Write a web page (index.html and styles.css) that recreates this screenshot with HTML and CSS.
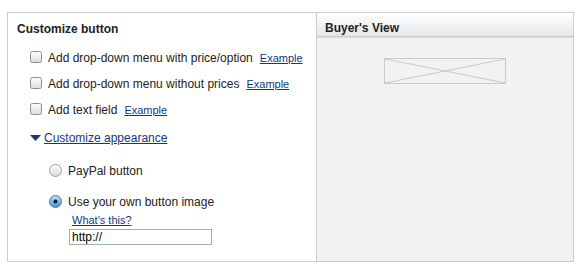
FILE: index.html
```html
<!DOCTYPE html>
<html>
<head>
<meta charset="utf-8">
<link rel="stylesheet" href="styles.css">
</head>
<body>
<div class="wrap">
  <div class="left">
    <div class="heading">Customize button</div>
    <div class="row first">
      <svg class="cb" width="12" height="12" viewBox="0 0 12 12"><defs><linearGradient id="g1" x1="0" y1="0" x2="0" y2="1"><stop offset="0" stop-color="#ffffff"/><stop offset="1" stop-color="#dcdcdc"/></linearGradient></defs><rect x="0.5" y="0.5" width="11" height="11" rx="2" fill="url(#g1)" stroke="#8e8e8e"/></svg>
      <span class="label">Add drop-down menu with price/option</span>
      <a class="link" href="#">Example</a>
    </div>
    <div class="row">
      <svg class="cb" width="12" height="12" viewBox="0 0 12 12"><rect x="0.5" y="0.5" width="11" height="11" rx="2" fill="url(#g1)" stroke="#8e8e8e"/></svg>
      <span class="label">Add drop-down menu without prices</span>
      <a class="link" href="#">Example</a>
    </div>
    <div class="row">
      <svg class="cb" width="12" height="12" viewBox="0 0 12 12"><rect x="0.5" y="0.5" width="11" height="11" rx="2" fill="url(#g1)" stroke="#8e8e8e"/></svg>
      <span class="label">Add text field</span>
      <a class="link" href="#">Example</a>
    </div>
    <div class="toggle">
      <svg class="tri" width="11" height="6" viewBox="0 0 11 6"><polygon points="0,0 11,0 5.5,6" fill="#0e3a7e"/></svg>
      <a class="biglink" href="#">Customize appearance</a>
    </div>
    <div class="radio r1">
      <svg class="rd" width="13" height="13" viewBox="0 0 13 13"><defs><linearGradient id="g2" x1="0" y1="0" x2="0" y2="1"><stop offset="0" stop-color="#ffffff"/><stop offset="1" stop-color="#d8d8d8"/></linearGradient><linearGradient id="g3" x1="0" y1="0" x2="0" y2="1"><stop offset="0" stop-color="#bfe0fa"/><stop offset="1" stop-color="#3f8fdc"/></linearGradient></defs><circle cx="6.5" cy="6.5" r="6" fill="url(#g2)" stroke="#9c9c9c"/></svg>
      <span class="label">PayPal button</span>
    </div>
    <div class="radio r2">
      <svg class="rd" width="13" height="13" viewBox="0 0 13 13"><circle cx="6.5" cy="6.5" r="6" fill="url(#g3)" stroke="#4d79a8"/><circle cx="6.5" cy="6.5" r="2" fill="#1b1b1b"/></svg>
      <span class="label">Use your own button image</span>
    </div>
    <div class="sub">
      <a class="link" href="#">What's this?</a>
      <input class="url" type="text" value="http://">
    </div>
  </div>
  <div class="right">
    <div class="rhead">Buyer's View</div>
    <div class="rbody">
      <svg class="ph" width="122" height="26" viewBox="0 0 122 26"><rect x="0.5" y="0.5" width="121" height="25" fill="none" stroke="#c9c9c9"/><line x1="1" y1="1" x2="121" y2="25" stroke="#c9c9c9"/><line x1="121" y1="1" x2="1" y2="25" stroke="#c9c9c9"/></svg>
    </div>
  </div>
</div>
</body>
</html>
```

FILE: styles.css
```css
html, body {
  margin: 0;
  padding: 0;
  background: #ffffff;
}
body {
  font-family: "Liberation Sans", Arial, sans-serif;
  font-size: 12px;
  color: #222222;
}
.wrap {
  margin: 12px 0 0 7px;
  width: 565px;
  height: 248px;
  border: 1px solid #cccccc;
  display: flex;
}
.left {
  width: 308px;
  padding: 9px 0 0 9px;
  box-sizing: border-box;
  background: #ffffff;
}
.heading {
  font-weight: bold;
  font-size: 12px;
  line-height: 14px;
  color: #222222;
}
.row {
  display: flex;
  align-items: center;
  margin: 10px 0 0 13px;
  height: 16px;
  line-height: 16px;
}
.row.first {
  margin-top: 14px;
}
.cb {
  display: block;
  margin-right: 6px;
  position: relative;
  top: -1px;
}
.label {
  white-space: nowrap;
}
.link {
  font-size: 11px;
  color: #0e3a7e;
  text-decoration: underline;
  margin-left: 7px;
}
.toggle {
  display: flex;
  align-items: center;
  margin: 12px 0 0 13px;
  height: 16px;
  line-height: 16px;
}
.tri {
  display: block;
  margin-right: 3px;
}
.biglink {
  color: #0e3a7e;
  text-decoration: underline;
}
.radio {
  display: flex;
  align-items: center;
  margin-left: 32px;
  height: 16px;
  line-height: 16px;
}
.radio.r1 {
  margin-top: 17px;
}
.radio.r2 {
  margin-top: 15px;
}
.rd {
  display: block;
  margin-right: 6px;
  position: relative;
  top: -1px;
}
.sub {
  display: flex;
  flex-direction: column;
  align-items: flex-start;
  margin: 4px 0 0 52px;
}
.sub .link {
  margin-left: 3px;
  line-height: 13px;
}
.url {
  margin: 2px 0 0 0;
  width: 143px;
  height: 16px;
  box-sizing: border-box;
  border: 1px solid #a3abb5;
  padding: 0 2px;
  font-family: "Liberation Sans", Arial, sans-serif;
  font-size: 12px;
  color: #000000;
  background: #ffffff;
  outline: none;
}
.right {
  flex: 1;
  border-left: 1px solid #cccccc;
  background: #f2f2f2;
  display: flex;
  flex-direction: column;
}
.rhead {
  height: 24px;
  box-sizing: border-box;
  padding: 8px 0 0 8px;
  line-height: 14px;
  font-weight: bold;
  color: #222222;
  background: linear-gradient(#ffffff, #e6e7ea);
  border-bottom: 1px solid #c8c8c8;
  box-shadow: 0 1px 0 #e4e4e4, 0 2px 0 #ececec;
}
.rbody {
  flex: 1;
  display: flex;
  justify-content: center;
  align-items: flex-start;
  padding-top: 21px;
}
.ph {
  display: block;
}
```
